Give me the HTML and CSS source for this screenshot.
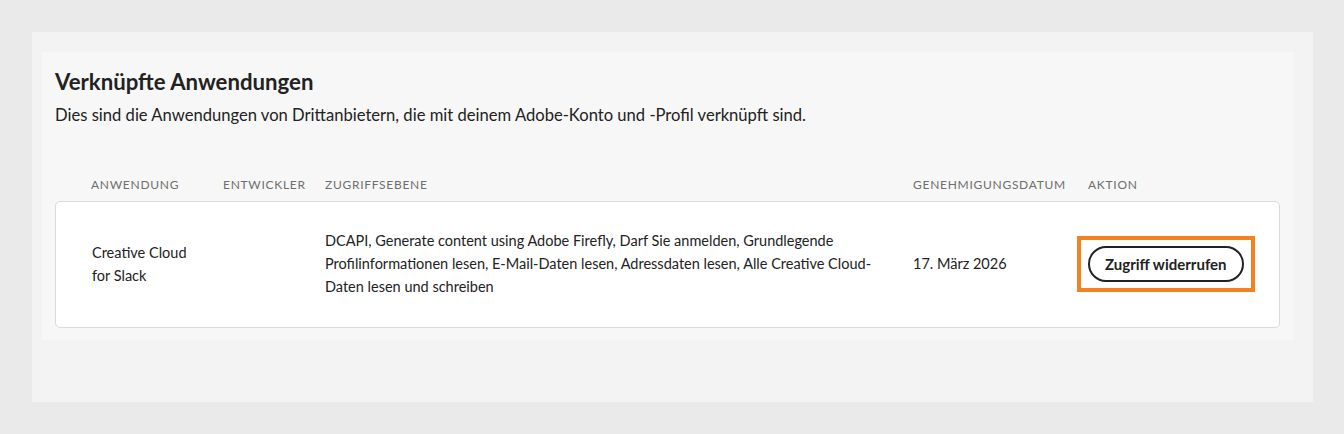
FILE: index.html
```html
<!DOCTYPE html>
<html lang="de">
<head>
<meta charset="utf-8">
<title>Verknüpfte Anwendungen</title>
<link rel="stylesheet" href="styles.css">
</head>
<body>
<div class="outer">
  <section class="panel">
    <h1 class="title">Verknüpfte Anwendungen</h1>
    <p class="subtitle">Dies sind die Anwendungen von Drittanbietern, die mit deinem Adobe-Konto und -Profil verknüpft sind.</p>
    <div class="table">
      <div class="thead">
        <div class="th">Anwendung</div>
        <div class="th">Entwickler</div>
        <div class="th">Zugriffsebene</div>
        <div class="th">Genehmigungsdatum</div>
        <div class="th">Aktion</div>
      </div>
      <div class="row">
        <div class="cell app">Creative Cloud<br>for Slack</div>
        <div class="cell"></div>
        <div class="cell scope">DCAPI, Generate content using Adobe Firefly, Darf Sie anmelden, Grundlegende Profilinformationen lesen, E-Mail-Daten lesen, Adressdaten lesen, Alle Creative Cloud-Daten lesen und schreiben</div>
        <div class="cell date">17. März 2026</div>
        <div class="cell action"><span class="highlight"><button class="revoke" type="button">Zugriff widerrufen</button></span></div>
      </div>
    </div>
  </section>
</div>
</body>
</html>
```
FILE: styles.css
```css
* { box-sizing: border-box; }
html, body { margin: 0; padding: 0; }
body {
  background: #eaeaea;
  font-family: "Lato", "Open Sans", sans-serif;
  color: #2c2c2c;
  padding: 32px 31px 32px 32px;
}
.outer {
  background: #f3f3f3;
  height: 370px;
  padding: 20px 20px 0 10px;
}
.panel {
  background: #f7f7f7;
  padding: 15px 13px 12px 13px;
}
.title {
  margin: 0;
  font-size: 22.2px;
  font-weight: 700;
  line-height: 30px;
  color: #222;
}
.subtitle {
  margin: 6px 0 0;
  font-size: 16.6px;
  line-height: 25px;
  color: #222;
}
.table { margin-top: 49px; }
.thead, .row {
  display: grid;
  grid-template-columns: 132px 102px 588px 175px 1fr;
  padding-left: 36px;
}
.row .cell:nth-child(3),
.row .cell:nth-child(4) { margin-left: -1px; }
.th {
  font-size: 12px;
  letter-spacing: 0.06em;
  text-transform: uppercase;
  color: #6e6e6e;
  line-height: 16px;
  padding-bottom: 8px;
}
.row {
  background: #fff;
  border: 1px solid #dadada;
  border-radius: 5px;
  align-items: center;
  padding-top: 27px;
  padding-bottom: 29px;
}
.cell {
  font-size: 14.5px;
  line-height: 23px;
  color: #222;
}
.scope { padding-right: 30px; }
.action { margin-left: -12px; }
.highlight {
  display: inline-block;
  border: 4px solid #f58220;
  padding: 6px 7px;
  line-height: 0;
}
.revoke {
  font-family: inherit;
  font-size: 15px;
  font-weight: 700;
  color: #222;
  background: #fff;
  border: 2px solid #222;
  border-radius: 18px;
  height: 36px;
  padding: 0 15px;
}
```
